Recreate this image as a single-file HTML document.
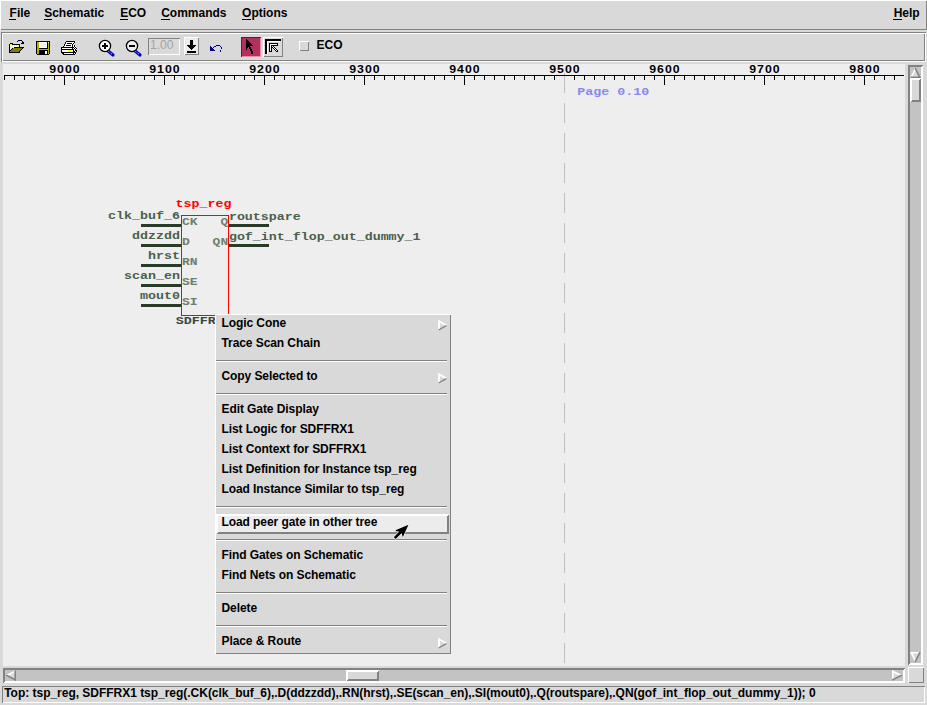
<!DOCTYPE html>
<html><head><meta charset="utf-8"><style>
html,body{margin:0;padding:0;background:#d9d9d9;width:927px;height:705px;overflow:hidden}
svg{position:absolute;left:0;top:0;display:block}
</style></head><body>
<svg width="927" height="705" viewBox="0 0 927 705" shape-rendering="crispEdges">
<rect x="0" y="0" width="927" height="1" fill="#ffffff"/>
<rect x="0" y="0" width="1" height="30" fill="#ffffff"/>
<rect x="1" y="29" width="926" height="1" fill="#828282"/>
<rect x="926" y="1" width="1" height="29" fill="#828282"/>
<text x="9.6" y="17" font-family="Liberation Sans" font-size="12" font-weight="bold" fill="#000" text-anchor="start" >File</text>
<text x="44.2" y="17" font-family="Liberation Sans" font-size="12" font-weight="bold" fill="#000" text-anchor="start" >Schematic</text>
<text x="120.2" y="17" font-family="Liberation Sans" font-size="12" font-weight="bold" fill="#000" text-anchor="start" >ECO</text>
<text x="161.2" y="17" font-family="Liberation Sans" font-size="12" font-weight="bold" fill="#000" text-anchor="start" >Commands</text>
<text x="242.1" y="17" font-family="Liberation Sans" font-size="12" font-weight="bold" fill="#000" text-anchor="start" >Options</text>
<rect x="9" y="19" width="7" height="1" fill="#000"/>
<rect x="44" y="19" width="8" height="1" fill="#000"/>
<rect x="120" y="19" width="8" height="1" fill="#000"/>
<rect x="161" y="19" width="9" height="1" fill="#000"/>
<rect x="242" y="19" width="9" height="1" fill="#000"/>
<rect x="893" y="19" width="9" height="1" fill="#000"/>
<text x="893.7" y="17" font-family="Liberation Sans" font-size="12" font-weight="bold" fill="#000" text-anchor="start" >Help</text>
<rect x="1" y="32" width="925" height="1" fill="#828282"/>
<rect x="1" y="32" width="1" height="30" fill="#828282"/>
<rect x="2" y="61" width="924" height="1" fill="#ffffff"/>
<rect x="925" y="33" width="1" height="29" fill="#ffffff"/>
<rect x="2" y="33" width="923" height="1" fill="#ffffff"/>
<rect x="2" y="33" width="1" height="28" fill="#ffffff"/>
<rect x="3" y="60" width="922" height="1" fill="#828282"/>
<rect x="924" y="34" width="1" height="27" fill="#828282"/>
<rect x="18" y="40" width="4" height="1" fill="#000000"/>
<rect x="17" y="41" width="1" height="1" fill="#000000"/>
<rect x="22" y="41" width="1" height="1" fill="#000000"/>
<rect x="22" y="42" width="2" height="1" fill="#000000"/>
<rect x="10" y="43" width="3" height="1" fill="#000000"/>
<rect x="21" y="43" width="3" height="1" fill="#000000"/>
<rect x="9" y="44" width="1" height="1" fill="#000000"/>
<rect x="10" y="44" width="2" height="1" fill="#ffff00"/>
<rect x="12" y="44" width="8" height="1" fill="#000000"/>
<rect x="9" y="45" width="1" height="1" fill="#000000"/>
<rect x="10" y="45" width="1" height="1" fill="#ffff00"/>
<rect x="11" y="45" width="1" height="1" fill="#ffffff"/>
<rect x="12" y="45" width="1" height="1" fill="#ffff00"/>
<rect x="13" y="45" width="1" height="1" fill="#ffffff"/>
<rect x="14" y="45" width="1" height="1" fill="#ffff00"/>
<rect x="15" y="45" width="1" height="1" fill="#ffffff"/>
<rect x="16" y="45" width="1" height="1" fill="#ffff00"/>
<rect x="17" y="45" width="1" height="1" fill="#ffffff"/>
<rect x="18" y="45" width="1" height="1" fill="#ffff00"/>
<rect x="19" y="45" width="1" height="1" fill="#000000"/>
<rect x="9" y="46" width="1" height="1" fill="#000000"/>
<rect x="10" y="46" width="1" height="1" fill="#ffffff"/>
<rect x="11" y="46" width="1" height="1" fill="#ffff00"/>
<rect x="12" y="46" width="1" height="1" fill="#ffffff"/>
<rect x="13" y="46" width="1" height="1" fill="#ffff00"/>
<rect x="14" y="46" width="1" height="1" fill="#ffffff"/>
<rect x="15" y="46" width="1" height="1" fill="#ffff00"/>
<rect x="16" y="46" width="1" height="1" fill="#ffffff"/>
<rect x="17" y="46" width="2" height="1" fill="#ffff00"/>
<rect x="19" y="46" width="1" height="1" fill="#000000"/>
<rect x="9" y="47" width="1" height="1" fill="#000000"/>
<rect x="10" y="47" width="1" height="1" fill="#ffff00"/>
<rect x="11" y="47" width="1" height="1" fill="#ffffff"/>
<rect x="12" y="47" width="1" height="1" fill="#ffff00"/>
<rect x="13" y="47" width="1" height="1" fill="#ffffff"/>
<rect x="14" y="47" width="10" height="1" fill="#000000"/>
<rect x="9" y="48" width="1" height="1" fill="#000000"/>
<rect x="10" y="48" width="1" height="1" fill="#ffffff"/>
<rect x="11" y="48" width="1" height="1" fill="#ffff00"/>
<rect x="12" y="48" width="1" height="1" fill="#000000"/>
<rect x="13" y="48" width="9" height="1" fill="#808000"/>
<rect x="22" y="48" width="1" height="1" fill="#000000"/>
<rect x="9" y="49" width="1" height="1" fill="#000000"/>
<rect x="10" y="49" width="1" height="1" fill="#ffff00"/>
<rect x="11" y="49" width="1" height="1" fill="#000000"/>
<rect x="12" y="49" width="9" height="1" fill="#808000"/>
<rect x="21" y="49" width="1" height="1" fill="#000000"/>
<rect x="9" y="50" width="2" height="1" fill="#000000"/>
<rect x="11" y="50" width="9" height="1" fill="#808000"/>
<rect x="20" y="50" width="1" height="1" fill="#000000"/>
<rect x="9" y="51" width="1" height="1" fill="#000000"/>
<rect x="10" y="51" width="9" height="1" fill="#808000"/>
<rect x="19" y="51" width="1" height="1" fill="#000000"/>
<rect x="9" y="52" width="11" height="1" fill="#000000"/>
<rect x="36" y="41" width="14" height="1" fill="#000000"/>
<rect x="36" y="42" width="1" height="1" fill="#000000"/>
<rect x="37" y="42" width="2" height="1" fill="#b4b400"/>
<rect x="39" y="42" width="8" height="1" fill="#ffffff"/>
<rect x="47" y="42" width="1" height="1" fill="#000000"/>
<rect x="48" y="42" width="1" height="1" fill="#ffffff"/>
<rect x="49" y="42" width="1" height="1" fill="#000000"/>
<rect x="36" y="43" width="1" height="1" fill="#000000"/>
<rect x="37" y="43" width="2" height="1" fill="#b4b400"/>
<rect x="39" y="43" width="1" height="1" fill="#ffffff"/>
<rect x="40" y="43" width="6" height="1" fill="#eeeef4"/>
<rect x="46" y="43" width="1" height="1" fill="#ffffff"/>
<rect x="47" y="43" width="1" height="1" fill="#000000"/>
<rect x="48" y="43" width="1" height="1" fill="#b4b400"/>
<rect x="49" y="43" width="1" height="1" fill="#000000"/>
<rect x="36" y="44" width="1" height="1" fill="#000000"/>
<rect x="37" y="44" width="2" height="1" fill="#b4b400"/>
<rect x="39" y="44" width="1" height="1" fill="#ffffff"/>
<rect x="40" y="44" width="6" height="1" fill="#eeeef4"/>
<rect x="46" y="44" width="1" height="1" fill="#ffffff"/>
<rect x="47" y="44" width="1" height="1" fill="#000000"/>
<rect x="48" y="44" width="1" height="1" fill="#b4b400"/>
<rect x="49" y="44" width="1" height="1" fill="#000000"/>
<rect x="36" y="45" width="1" height="1" fill="#000000"/>
<rect x="37" y="45" width="2" height="1" fill="#b4b400"/>
<rect x="39" y="45" width="1" height="1" fill="#ffffff"/>
<rect x="40" y="45" width="6" height="1" fill="#eeeef4"/>
<rect x="46" y="45" width="1" height="1" fill="#ffffff"/>
<rect x="47" y="45" width="1" height="1" fill="#000000"/>
<rect x="48" y="45" width="1" height="1" fill="#b4b400"/>
<rect x="49" y="45" width="1" height="1" fill="#000000"/>
<rect x="36" y="46" width="1" height="1" fill="#000000"/>
<rect x="37" y="46" width="2" height="1" fill="#b4b400"/>
<rect x="39" y="46" width="1" height="1" fill="#ffffff"/>
<rect x="40" y="46" width="6" height="1" fill="#eeeef4"/>
<rect x="46" y="46" width="1" height="1" fill="#ffffff"/>
<rect x="47" y="46" width="1" height="1" fill="#000000"/>
<rect x="48" y="46" width="1" height="1" fill="#b4b400"/>
<rect x="49" y="46" width="1" height="1" fill="#000000"/>
<rect x="36" y="47" width="1" height="1" fill="#000000"/>
<rect x="37" y="47" width="2" height="1" fill="#b4b400"/>
<rect x="39" y="47" width="8" height="1" fill="#ffffff"/>
<rect x="47" y="47" width="1" height="1" fill="#000000"/>
<rect x="48" y="47" width="1" height="1" fill="#b4b400"/>
<rect x="49" y="47" width="1" height="1" fill="#000000"/>
<rect x="36" y="48" width="1" height="1" fill="#000000"/>
<rect x="37" y="48" width="2" height="1" fill="#b4b400"/>
<rect x="39" y="48" width="9" height="1" fill="#000000"/>
<rect x="48" y="48" width="1" height="1" fill="#b4b400"/>
<rect x="49" y="48" width="1" height="1" fill="#000000"/>
<rect x="36" y="49" width="1" height="1" fill="#000000"/>
<rect x="37" y="49" width="12" height="1" fill="#b4b400"/>
<rect x="49" y="49" width="1" height="1" fill="#000000"/>
<rect x="36" y="50" width="1" height="1" fill="#000000"/>
<rect x="37" y="50" width="2" height="1" fill="#b4b400"/>
<rect x="39" y="50" width="9" height="1" fill="#000000"/>
<rect x="48" y="50" width="1" height="1" fill="#b4b400"/>
<rect x="49" y="50" width="1" height="1" fill="#000000"/>
<rect x="36" y="51" width="1" height="1" fill="#000000"/>
<rect x="37" y="51" width="2" height="1" fill="#b4b400"/>
<rect x="39" y="51" width="6" height="1" fill="#000000"/>
<rect x="45" y="51" width="2" height="1" fill="#ffffff"/>
<rect x="47" y="51" width="1" height="1" fill="#000000"/>
<rect x="48" y="51" width="1" height="1" fill="#b4b400"/>
<rect x="49" y="51" width="1" height="1" fill="#000000"/>
<rect x="36" y="52" width="1" height="1" fill="#000000"/>
<rect x="37" y="52" width="2" height="1" fill="#b4b400"/>
<rect x="39" y="52" width="6" height="1" fill="#000000"/>
<rect x="45" y="52" width="2" height="1" fill="#ffffff"/>
<rect x="47" y="52" width="1" height="1" fill="#000000"/>
<rect x="48" y="52" width="1" height="1" fill="#b4b400"/>
<rect x="49" y="52" width="1" height="1" fill="#000000"/>
<rect x="36" y="53" width="1" height="1" fill="#000000"/>
<rect x="37" y="53" width="2" height="1" fill="#b4b400"/>
<rect x="39" y="53" width="6" height="1" fill="#000000"/>
<rect x="45" y="53" width="2" height="1" fill="#ffffff"/>
<rect x="47" y="53" width="1" height="1" fill="#000000"/>
<rect x="48" y="53" width="1" height="1" fill="#b4b400"/>
<rect x="49" y="53" width="1" height="1" fill="#000000"/>
<rect x="37" y="54" width="12" height="1" fill="#000000"/>
<rect x="66" y="41" width="9" height="1" fill="#000000"/>
<rect x="65" y="42" width="1" height="1" fill="#000000"/>
<rect x="66" y="42" width="8" height="1" fill="#ffffff"/>
<rect x="74" y="42" width="1" height="1" fill="#000000"/>
<rect x="65" y="43" width="1" height="1" fill="#000000"/>
<rect x="66" y="43" width="1" height="1" fill="#ffffff"/>
<rect x="67" y="43" width="5" height="1" fill="#000000"/>
<rect x="72" y="43" width="1" height="1" fill="#ffffff"/>
<rect x="73" y="43" width="1" height="1" fill="#000000"/>
<rect x="64" y="44" width="1" height="1" fill="#000000"/>
<rect x="65" y="44" width="7" height="1" fill="#ffffff"/>
<rect x="72" y="44" width="1" height="1" fill="#000000"/>
<rect x="64" y="45" width="1" height="1" fill="#000000"/>
<rect x="65" y="45" width="1" height="1" fill="#ffffff"/>
<rect x="66" y="45" width="5" height="1" fill="#000000"/>
<rect x="71" y="45" width="1" height="1" fill="#ffffff"/>
<rect x="72" y="45" width="1" height="1" fill="#000000"/>
<rect x="73" y="45" width="1" height="1" fill="#ffffff"/>
<rect x="74" y="45" width="1" height="1" fill="#000000"/>
<rect x="63" y="46" width="1" height="1" fill="#000000"/>
<rect x="64" y="46" width="8" height="1" fill="#ffffff"/>
<rect x="72" y="46" width="1" height="1" fill="#000000"/>
<rect x="73" y="46" width="1" height="1" fill="#ffffff"/>
<rect x="74" y="46" width="1" height="1" fill="#000000"/>
<rect x="75" y="46" width="1" height="1" fill="#ffffff"/>
<rect x="61" y="47" width="13" height="1" fill="#000000"/>
<rect x="74" y="47" width="1" height="1" fill="#ffffff"/>
<rect x="75" y="47" width="1" height="1" fill="#000000"/>
<rect x="61" y="48" width="1" height="1" fill="#000000"/>
<rect x="62" y="48" width="10" height="1" fill="#ffffff"/>
<rect x="72" y="48" width="1" height="1" fill="#000000"/>
<rect x="73" y="48" width="1" height="1" fill="#ffffff"/>
<rect x="74" y="48" width="1" height="1" fill="#000000"/>
<rect x="75" y="48" width="1" height="1" fill="#ffffff"/>
<rect x="76" y="48" width="1" height="1" fill="#000000"/>
<rect x="61" y="49" width="13" height="1" fill="#000000"/>
<rect x="74" y="49" width="1" height="1" fill="#ffffff"/>
<rect x="75" y="49" width="1" height="1" fill="#000000"/>
<rect x="61" y="50" width="1" height="1" fill="#000000"/>
<rect x="62" y="50" width="6" height="1" fill="#ffffff"/>
<rect x="68" y="50" width="3" height="1" fill="#ffff00"/>
<rect x="71" y="50" width="2" height="1" fill="#ffffff"/>
<rect x="73" y="50" width="1" height="1" fill="#000000"/>
<rect x="74" y="50" width="1" height="1" fill="#ffffff"/>
<rect x="75" y="50" width="2" height="1" fill="#000000"/>
<rect x="61" y="51" width="1" height="1" fill="#000000"/>
<rect x="62" y="51" width="6" height="1" fill="#ffffff"/>
<rect x="68" y="51" width="3" height="1" fill="#ffff00"/>
<rect x="71" y="51" width="2" height="1" fill="#ffffff"/>
<rect x="73" y="51" width="2" height="1" fill="#000000"/>
<rect x="75" y="51" width="1" height="1" fill="#ffffff"/>
<rect x="76" y="51" width="1" height="1" fill="#000000"/>
<rect x="61" y="52" width="15" height="1" fill="#000000"/>
<rect x="62" y="53" width="2" height="1" fill="#000000"/>
<rect x="64" y="53" width="9" height="1" fill="#ffffff"/>
<rect x="73" y="53" width="1" height="1" fill="#000000"/>
<rect x="74" y="53" width="1" height="1" fill="#ffffff"/>
<rect x="75" y="53" width="1" height="1" fill="#000000"/>
<rect x="63" y="54" width="12" height="1" fill="#000000"/>
<g shape-rendering="auto"><line x1="107.5" y1="50.5" x2="113" y2="55" stroke="#0000c0" stroke-width="3.2" stroke-linecap="round"/><line x1="108" y1="51" x2="112.5" y2="54.6" stroke="#ffffff" stroke-width="0.8" stroke-dasharray="1 1"/><circle cx="105" cy="46" r="5.6" fill="#ffffff" stroke="#000" stroke-width="1.3"/></g>
<rect x="102" y="45" width="6" height="2" fill="#000"/>
<rect x="104" y="43" width="2" height="6" fill="#000"/>
<g shape-rendering="auto"><line x1="134.5" y1="50.5" x2="140" y2="55" stroke="#0000c0" stroke-width="3.2" stroke-linecap="round"/><line x1="135" y1="51" x2="139.5" y2="54.6" stroke="#ffffff" stroke-width="0.8" stroke-dasharray="1 1"/><circle cx="132" cy="46" r="5.6" fill="#eeeeee" stroke="#000" stroke-width="1.3"/></g>
<rect x="129" y="45" width="6" height="2" fill="#000"/>
<rect x="148" y="38" width="32" height="17" fill="#d9d9d9"/>
<rect x="148" y="38" width="32" height="1" fill="#828282"/>
<rect x="148" y="38" width="1" height="17" fill="#828282"/>
<rect x="149" y="54" width="31" height="1" fill="#ffffff"/>
<rect x="179" y="39" width="1" height="16" fill="#ffffff"/>
<text x="150" y="49" font-family="Liberation Sans" font-size="12" font-weight="normal" fill="#a3a3a3" text-anchor="start" >1.00</text>
<rect x="184" y="37" width="15" height="18" fill="#ececec"/>
<rect x="184" y="37" width="15" height="1" fill="#ffffff"/>
<rect x="184" y="37" width="1" height="18" fill="#ffffff"/>
<rect x="185" y="54" width="14" height="1" fill="#828282"/>
<rect x="198" y="38" width="1" height="17" fill="#828282"/>
<rect x="190" y="40" width="3" height="1" fill="#000000"/>
<rect x="190" y="41" width="3" height="1" fill="#000000"/>
<rect x="190" y="42" width="3" height="1" fill="#000000"/>
<rect x="190" y="43" width="3" height="1" fill="#000000"/>
<rect x="190" y="44" width="3" height="1" fill="#000000"/>
<rect x="187" y="45" width="9" height="1" fill="#000000"/>
<rect x="188" y="46" width="7" height="1" fill="#000000"/>
<rect x="189" y="47" width="5" height="1" fill="#000000"/>
<rect x="190" y="48" width="3" height="1" fill="#000000"/>
<rect x="191" y="49" width="1" height="1" fill="#000000"/>
<rect x="187" y="51" width="9" height="1" fill="#000000"/>
<rect x="187" y="52" width="9" height="1" fill="#000000"/>
<rect x="216" y="45" width="4" height="1" fill="#000080"/>
<rect x="210" y="46" width="1" height="1" fill="#000080"/>
<rect x="214" y="46" width="2" height="1" fill="#000080"/>
<rect x="220" y="46" width="1" height="1" fill="#000080"/>
<rect x="210" y="47" width="2" height="1" fill="#000080"/>
<rect x="213" y="47" width="1" height="1" fill="#000080"/>
<rect x="221" y="47" width="1" height="1" fill="#000080"/>
<rect x="210" y="48" width="3" height="1" fill="#000080"/>
<rect x="221" y="48" width="1" height="1" fill="#000080"/>
<rect x="210" y="49" width="4" height="1" fill="#000080"/>
<rect x="210" y="50" width="5" height="1" fill="#000080"/>
<rect x="220" y="50" width="1" height="1" fill="#000080"/>
<rect x="220" y="51" width="1" height="1" fill="#000080"/>
<rect x="241" y="37" width="20" height="20" fill="#b03060"/>
<rect x="241" y="37" width="20" height="1" fill="#6b1237"/>
<rect x="241" y="37" width="1" height="20" fill="#6b1237"/>
<rect x="242" y="56" width="19" height="1" fill="#f08aa8"/>
<rect x="260" y="38" width="1" height="19" fill="#f08aa8"/>
<rect x="246" y="39" width="1" height="1" fill="#000000"/>
<rect x="246" y="40" width="2" height="1" fill="#000000"/>
<rect x="246" y="41" width="3" height="1" fill="#000000"/>
<rect x="246" y="42" width="4" height="1" fill="#000000"/>
<rect x="246" y="43" width="5" height="1" fill="#000000"/>
<rect x="246" y="44" width="6" height="1" fill="#000000"/>
<rect x="246" y="45" width="7" height="1" fill="#000000"/>
<rect x="246" y="46" width="4" height="1" fill="#000000"/>
<rect x="246" y="47" width="2" height="1" fill="#000000"/>
<rect x="249" y="47" width="2" height="1" fill="#000000"/>
<rect x="246" y="48" width="1" height="1" fill="#000000"/>
<rect x="249" y="48" width="2" height="1" fill="#000000"/>
<rect x="246" y="49" width="1" height="1" fill="#000000"/>
<rect x="250" y="49" width="2" height="1" fill="#000000"/>
<rect x="250" y="50" width="2" height="1" fill="#000000"/>
<rect x="251" y="51" width="2" height="1" fill="#000000"/>
<rect x="251" y="52" width="2" height="1" fill="#000000"/>
<rect x="251" y="53" width="2" height="1" fill="#000000"/>
<rect x="263" y="37" width="20" height="20" fill="#d9d9d9"/>
<rect x="263" y="37" width="20" height="1" fill="#ffffff"/>
<rect x="263" y="37" width="1" height="20" fill="#ffffff"/>
<rect x="264" y="56" width="19" height="1" fill="#828282"/>
<rect x="282" y="38" width="1" height="19" fill="#828282"/>
<rect x="265" y="39" width="16" height="1" fill="#000000"/>
<rect x="265" y="40" width="16" height="1" fill="#000000"/>
<rect x="265" y="41" width="2" height="1" fill="#000000"/>
<rect x="267" y="41" width="13" height="1" fill="#ffffff"/>
<rect x="265" y="42" width="2" height="1" fill="#000000"/>
<rect x="267" y="42" width="1" height="1" fill="#ffffff"/>
<rect x="265" y="43" width="2" height="1" fill="#000000"/>
<rect x="267" y="43" width="1" height="1" fill="#ffffff"/>
<rect x="269" y="43" width="9" height="1" fill="#000000"/>
<rect x="265" y="44" width="2" height="1" fill="#000000"/>
<rect x="267" y="44" width="1" height="1" fill="#ffffff"/>
<rect x="269" y="44" width="1" height="1" fill="#000000"/>
<rect x="270" y="44" width="7" height="1" fill="#ffffff"/>
<rect x="277" y="44" width="1" height="1" fill="#000000"/>
<rect x="265" y="45" width="2" height="1" fill="#000000"/>
<rect x="267" y="45" width="1" height="1" fill="#ffffff"/>
<rect x="269" y="45" width="1" height="1" fill="#000000"/>
<rect x="270" y="45" width="1" height="1" fill="#ffffff"/>
<rect x="271" y="45" width="7" height="1" fill="#000000"/>
<rect x="265" y="46" width="2" height="1" fill="#000000"/>
<rect x="267" y="46" width="1" height="1" fill="#ffffff"/>
<rect x="269" y="46" width="1" height="1" fill="#000000"/>
<rect x="270" y="46" width="1" height="1" fill="#ffffff"/>
<rect x="271" y="46" width="1" height="1" fill="#000000"/>
<rect x="272" y="46" width="1" height="1" fill="#ffffff"/>
<rect x="273" y="46" width="1" height="1" fill="#000000"/>
<rect x="265" y="47" width="2" height="1" fill="#000000"/>
<rect x="267" y="47" width="1" height="1" fill="#ffffff"/>
<rect x="269" y="47" width="1" height="1" fill="#000000"/>
<rect x="270" y="47" width="1" height="1" fill="#ffffff"/>
<rect x="271" y="47" width="2" height="1" fill="#000000"/>
<rect x="273" y="47" width="1" height="1" fill="#ffffff"/>
<rect x="274" y="47" width="1" height="1" fill="#000000"/>
<rect x="265" y="48" width="2" height="1" fill="#000000"/>
<rect x="267" y="48" width="1" height="1" fill="#ffffff"/>
<rect x="269" y="48" width="1" height="1" fill="#000000"/>
<rect x="270" y="48" width="1" height="1" fill="#ffffff"/>
<rect x="271" y="48" width="1" height="1" fill="#000000"/>
<rect x="273" y="48" width="1" height="1" fill="#000000"/>
<rect x="274" y="48" width="1" height="1" fill="#ffffff"/>
<rect x="275" y="48" width="1" height="1" fill="#000000"/>
<rect x="265" y="49" width="2" height="1" fill="#000000"/>
<rect x="267" y="49" width="1" height="1" fill="#ffffff"/>
<rect x="269" y="49" width="1" height="1" fill="#000000"/>
<rect x="270" y="49" width="1" height="1" fill="#ffffff"/>
<rect x="271" y="49" width="1" height="1" fill="#000000"/>
<rect x="274" y="49" width="1" height="1" fill="#000000"/>
<rect x="275" y="49" width="1" height="1" fill="#ffffff"/>
<rect x="276" y="49" width="1" height="1" fill="#000000"/>
<rect x="265" y="50" width="2" height="1" fill="#000000"/>
<rect x="267" y="50" width="1" height="1" fill="#ffffff"/>
<rect x="269" y="50" width="1" height="1" fill="#000000"/>
<rect x="270" y="50" width="1" height="1" fill="#ffffff"/>
<rect x="271" y="50" width="1" height="1" fill="#000000"/>
<rect x="275" y="50" width="1" height="1" fill="#000000"/>
<rect x="276" y="50" width="1" height="1" fill="#ffffff"/>
<rect x="277" y="50" width="1" height="1" fill="#000000"/>
<rect x="265" y="51" width="2" height="1" fill="#000000"/>
<rect x="267" y="51" width="1" height="1" fill="#ffffff"/>
<rect x="269" y="51" width="3" height="1" fill="#000000"/>
<rect x="276" y="51" width="2" height="1" fill="#000000"/>
<rect x="265" y="52" width="2" height="1" fill="#000000"/>
<rect x="267" y="52" width="1" height="1" fill="#ffffff"/>
<rect x="265" y="53" width="2" height="1" fill="#000000"/>
<rect x="267" y="53" width="1" height="1" fill="#ffffff"/>
<rect x="299" y="41" width="10" height="10" fill="#d9d9d9"/>
<rect x="299" y="41" width="10" height="1" fill="#ffffff"/>
<rect x="299" y="41" width="1" height="10" fill="#ffffff"/>
<rect x="300" y="50" width="9" height="1" fill="#828282"/>
<rect x="308" y="42" width="1" height="9" fill="#828282"/>
<text x="316.6" y="49" font-family="Liberation Sans" font-size="12" font-weight="bold" fill="#000" text-anchor="start" >ECO</text>
<rect x="3" y="64" width="902" height="602" fill="#eeeeee"/>
<rect x="4" y="76" width="1" height="4" fill="#000"/>
<rect x="14" y="76" width="1" height="4" fill="#000"/>
<rect x="24" y="76" width="1" height="4" fill="#000"/>
<rect x="34" y="76" width="1" height="4" fill="#000"/>
<rect x="44" y="76" width="1" height="4" fill="#000"/>
<rect x="54" y="76" width="1" height="4" fill="#000"/>
<rect x="64" y="76" width="1" height="9" fill="#000"/>
<rect x="74" y="76" width="1" height="4" fill="#000"/>
<rect x="84" y="76" width="1" height="4" fill="#000"/>
<rect x="94" y="76" width="1" height="4" fill="#000"/>
<rect x="104" y="76" width="1" height="4" fill="#000"/>
<rect x="114" y="76" width="1" height="4" fill="#000"/>
<rect x="124" y="76" width="1" height="4" fill="#000"/>
<rect x="134" y="76" width="1" height="4" fill="#000"/>
<rect x="144" y="76" width="1" height="4" fill="#000"/>
<rect x="154" y="76" width="1" height="4" fill="#000"/>
<rect x="164" y="76" width="1" height="9" fill="#000"/>
<rect x="174" y="76" width="1" height="4" fill="#000"/>
<rect x="184" y="76" width="1" height="4" fill="#000"/>
<rect x="194" y="76" width="1" height="4" fill="#000"/>
<rect x="204" y="76" width="1" height="4" fill="#000"/>
<rect x="214" y="76" width="1" height="4" fill="#000"/>
<rect x="224" y="76" width="1" height="4" fill="#000"/>
<rect x="234" y="76" width="1" height="4" fill="#000"/>
<rect x="244" y="76" width="1" height="4" fill="#000"/>
<rect x="254" y="76" width="1" height="4" fill="#000"/>
<rect x="264" y="76" width="1" height="9" fill="#000"/>
<rect x="274" y="76" width="1" height="4" fill="#000"/>
<rect x="284" y="76" width="1" height="4" fill="#000"/>
<rect x="294" y="76" width="1" height="4" fill="#000"/>
<rect x="304" y="76" width="1" height="4" fill="#000"/>
<rect x="314" y="76" width="1" height="4" fill="#000"/>
<rect x="324" y="76" width="1" height="4" fill="#000"/>
<rect x="334" y="76" width="1" height="4" fill="#000"/>
<rect x="344" y="76" width="1" height="4" fill="#000"/>
<rect x="354" y="76" width="1" height="4" fill="#000"/>
<rect x="364" y="76" width="1" height="9" fill="#000"/>
<rect x="374" y="76" width="1" height="4" fill="#000"/>
<rect x="384" y="76" width="1" height="4" fill="#000"/>
<rect x="394" y="76" width="1" height="4" fill="#000"/>
<rect x="404" y="76" width="1" height="4" fill="#000"/>
<rect x="414" y="76" width="1" height="4" fill="#000"/>
<rect x="424" y="76" width="1" height="4" fill="#000"/>
<rect x="434" y="76" width="1" height="4" fill="#000"/>
<rect x="444" y="76" width="1" height="4" fill="#000"/>
<rect x="454" y="76" width="1" height="4" fill="#000"/>
<rect x="464" y="76" width="1" height="9" fill="#000"/>
<rect x="474" y="76" width="1" height="4" fill="#000"/>
<rect x="484" y="76" width="1" height="4" fill="#000"/>
<rect x="494" y="76" width="1" height="4" fill="#000"/>
<rect x="504" y="76" width="1" height="4" fill="#000"/>
<rect x="514" y="76" width="1" height="4" fill="#000"/>
<rect x="524" y="76" width="1" height="4" fill="#000"/>
<rect x="534" y="76" width="1" height="4" fill="#000"/>
<rect x="544" y="76" width="1" height="4" fill="#000"/>
<rect x="554" y="76" width="1" height="4" fill="#000"/>
<rect x="574" y="76" width="1" height="4" fill="#000"/>
<rect x="584" y="76" width="1" height="4" fill="#000"/>
<rect x="594" y="76" width="1" height="4" fill="#000"/>
<rect x="604" y="76" width="1" height="4" fill="#000"/>
<rect x="614" y="76" width="1" height="4" fill="#000"/>
<rect x="624" y="76" width="1" height="4" fill="#000"/>
<rect x="634" y="76" width="1" height="4" fill="#000"/>
<rect x="644" y="76" width="1" height="4" fill="#000"/>
<rect x="654" y="76" width="1" height="4" fill="#000"/>
<rect x="664" y="76" width="1" height="9" fill="#000"/>
<rect x="674" y="76" width="1" height="4" fill="#000"/>
<rect x="684" y="76" width="1" height="4" fill="#000"/>
<rect x="694" y="76" width="1" height="4" fill="#000"/>
<rect x="704" y="76" width="1" height="4" fill="#000"/>
<rect x="714" y="76" width="1" height="4" fill="#000"/>
<rect x="724" y="76" width="1" height="4" fill="#000"/>
<rect x="734" y="76" width="1" height="4" fill="#000"/>
<rect x="744" y="76" width="1" height="4" fill="#000"/>
<rect x="754" y="76" width="1" height="4" fill="#000"/>
<rect x="764" y="76" width="1" height="9" fill="#000"/>
<rect x="774" y="76" width="1" height="4" fill="#000"/>
<rect x="784" y="76" width="1" height="4" fill="#000"/>
<rect x="794" y="76" width="1" height="4" fill="#000"/>
<rect x="804" y="76" width="1" height="4" fill="#000"/>
<rect x="814" y="76" width="1" height="4" fill="#000"/>
<rect x="824" y="76" width="1" height="4" fill="#000"/>
<rect x="834" y="76" width="1" height="4" fill="#000"/>
<rect x="844" y="76" width="1" height="4" fill="#000"/>
<rect x="854" y="76" width="1" height="4" fill="#000"/>
<rect x="864" y="76" width="1" height="9" fill="#000"/>
<rect x="874" y="76" width="1" height="4" fill="#000"/>
<rect x="884" y="76" width="1" height="4" fill="#000"/>
<rect x="894" y="76" width="1" height="4" fill="#000"/>
<text transform="translate(49.2,73) scale(1.12,1)" x="0" y="0" font-family="Liberation Sans" font-size="11" font-weight="bold" letter-spacing="0.94" fill="#000">9000</text>
<text transform="translate(149.2,73) scale(1.12,1)" x="0" y="0" font-family="Liberation Sans" font-size="11" font-weight="bold" letter-spacing="0.94" fill="#000">9100</text>
<text transform="translate(249.2,73) scale(1.12,1)" x="0" y="0" font-family="Liberation Sans" font-size="11" font-weight="bold" letter-spacing="0.94" fill="#000">9200</text>
<text transform="translate(349.2,73) scale(1.12,1)" x="0" y="0" font-family="Liberation Sans" font-size="11" font-weight="bold" letter-spacing="0.94" fill="#000">9300</text>
<text transform="translate(449.2,73) scale(1.12,1)" x="0" y="0" font-family="Liberation Sans" font-size="11" font-weight="bold" letter-spacing="0.94" fill="#000">9400</text>
<text transform="translate(549.2,73) scale(1.12,1)" x="0" y="0" font-family="Liberation Sans" font-size="11" font-weight="bold" letter-spacing="0.94" fill="#000">9500</text>
<text transform="translate(649.2,73) scale(1.12,1)" x="0" y="0" font-family="Liberation Sans" font-size="11" font-weight="bold" letter-spacing="0.94" fill="#000">9600</text>
<text transform="translate(749.2,73) scale(1.12,1)" x="0" y="0" font-family="Liberation Sans" font-size="11" font-weight="bold" letter-spacing="0.94" fill="#000">9700</text>
<text transform="translate(849.2,73) scale(1.12,1)" x="0" y="0" font-family="Liberation Sans" font-size="11" font-weight="bold" letter-spacing="0.94" fill="#000">9800</text>
<rect x="564" y="73" width="1" height="20" fill="#c0c0c0"/>
<rect x="564" y="103" width="1" height="20" fill="#c0c0c0"/>
<rect x="564" y="133" width="1" height="20" fill="#c0c0c0"/>
<rect x="564" y="163" width="1" height="20" fill="#c0c0c0"/>
<rect x="564" y="193" width="1" height="20" fill="#c0c0c0"/>
<rect x="564" y="223" width="1" height="20" fill="#c0c0c0"/>
<rect x="564" y="253" width="1" height="20" fill="#c0c0c0"/>
<rect x="564" y="283" width="1" height="20" fill="#c0c0c0"/>
<rect x="564" y="313" width="1" height="20" fill="#c0c0c0"/>
<rect x="564" y="343" width="1" height="20" fill="#c0c0c0"/>
<rect x="564" y="373" width="1" height="20" fill="#c0c0c0"/>
<rect x="564" y="403" width="1" height="20" fill="#c0c0c0"/>
<rect x="564" y="433" width="1" height="20" fill="#c0c0c0"/>
<rect x="564" y="463" width="1" height="20" fill="#c0c0c0"/>
<rect x="564" y="493" width="1" height="20" fill="#c0c0c0"/>
<rect x="564" y="523" width="1" height="20" fill="#c0c0c0"/>
<rect x="564" y="553" width="1" height="20" fill="#c0c0c0"/>
<rect x="564" y="583" width="1" height="20" fill="#c0c0c0"/>
<rect x="564" y="613" width="1" height="20" fill="#c0c0c0"/>
<rect x="564" y="643" width="1" height="20" fill="#c0c0c0"/>
<text transform="translate(577.3,95) scale(1,0.82)" x="0" y="0" font-family="Liberation Mono" font-size="13.33" font-weight="bold" fill="#8888f4" letter-spacing="0">Page 0.10</text>
<rect x="4" y="75" width="900" height="1" fill="#000"/>
<rect x="141" y="224" width="40" height="3" fill="#283c28"/>
<text transform="translate(108.02,218.8) scale(1,0.81)" x="0" y="0" font-family="Liberation Mono" font-size="13.33" font-weight="bold" fill="#4a5f4a" letter-spacing="0">clk_buf_6</text>
<text transform="translate(182.0,224.7) scale(1,0.85)" x="0" y="0" font-family="Liberation Mono" font-size="13.0" font-weight="bold" fill="#6b806b" letter-spacing="0">CK</text>
<rect x="141" y="244" width="40" height="3" fill="#283c28"/>
<text transform="translate(132.01,238.8) scale(1,0.81)" x="0" y="0" font-family="Liberation Mono" font-size="13.33" font-weight="bold" fill="#4a5f4a" letter-spacing="0">ddzzdd</text>
<text transform="translate(182.0,244.7) scale(1,0.85)" x="0" y="0" font-family="Liberation Mono" font-size="13.0" font-weight="bold" fill="#6b806b" letter-spacing="0">D</text>
<rect x="141" y="264" width="40" height="3" fill="#283c28"/>
<text transform="translate(148.01,258.8) scale(1,0.81)" x="0" y="0" font-family="Liberation Mono" font-size="13.33" font-weight="bold" fill="#4a5f4a" letter-spacing="0">hrst</text>
<text transform="translate(182.0,264.7) scale(1,0.85)" x="0" y="0" font-family="Liberation Mono" font-size="13.0" font-weight="bold" fill="#6b806b" letter-spacing="0">RN</text>
<rect x="141" y="284" width="40" height="3" fill="#283c28"/>
<text transform="translate(124.01,278.8) scale(1,0.81)" x="0" y="0" font-family="Liberation Mono" font-size="13.33" font-weight="bold" fill="#4a5f4a" letter-spacing="0">scan_en</text>
<text transform="translate(182.0,284.7) scale(1,0.85)" x="0" y="0" font-family="Liberation Mono" font-size="13.0" font-weight="bold" fill="#6b806b" letter-spacing="0">SE</text>
<rect x="141" y="304" width="40" height="3" fill="#283c28"/>
<text transform="translate(140.01,298.8) scale(1,0.81)" x="0" y="0" font-family="Liberation Mono" font-size="13.33" font-weight="bold" fill="#4a5f4a" letter-spacing="0">mout0</text>
<text transform="translate(182.0,304.7) scale(1,0.85)" x="0" y="0" font-family="Liberation Mono" font-size="13.0" font-weight="bold" fill="#6b806b" letter-spacing="0">SI</text>
<rect x="229" y="224" width="40" height="3" fill="#283c28"/>
<text transform="translate(228.9,220) scale(1,0.81)" x="0" y="0" font-family="Liberation Mono" font-size="13.33" font-weight="bold" fill="#4a5f4a" letter-spacing="0">routspare</text>
<text transform="translate(220.4,224.7) scale(1,0.85)" x="0" y="0" font-family="Liberation Mono" font-size="13.0" font-weight="bold" fill="#6b806b" letter-spacing="0">Q</text>
<rect x="229" y="244" width="40" height="3" fill="#283c28"/>
<text transform="translate(228.9,240) scale(1,0.81)" x="0" y="0" font-family="Liberation Mono" font-size="13.33" font-weight="bold" fill="#4a5f4a" letter-spacing="0">gof_int_flop_out_dummy_1</text>
<text transform="translate(212.6,244.7) scale(1,0.85)" x="0" y="0" font-family="Liberation Mono" font-size="13.0" font-weight="bold" fill="#6b806b" letter-spacing="0">QN</text>
<rect x="181.5" y="215.5" width="47" height="100" fill="none" stroke="#ff0000" stroke-width="1"/>
<text transform="translate(175.5,206.9) scale(1,0.81)" x="0" y="0" font-family="Liberation Mono" font-size="13.33" font-weight="bold" fill="#ff0000" letter-spacing="0">tsp_reg</text>
<text transform="translate(175.7,324) scale(1,0.85)" x="0" y="0" font-family="Liberation Mono" font-size="13.33" font-weight="bold" fill="#3a4a3a" letter-spacing="0">SDFFRX1</text>
<rect x="908" y="65" width="15" height="600" fill="#c3c3c3"/>
<rect x="908" y="65" width="15" height="1" fill="#828282"/>
<rect x="908" y="65" width="1" height="600" fill="#828282"/>
<rect x="909" y="664" width="14" height="1" fill="#ffffff"/>
<rect x="922" y="66" width="1" height="599" fill="#ffffff"/>
<rect x="909" y="66" width="13" height="1" fill="#828282"/>
<rect x="909" y="66" width="1" height="598" fill="#828282"/>
<rect x="910" y="663" width="12" height="1" fill="#ffffff"/>
<rect x="921" y="67" width="1" height="597" fill="#ffffff"/>
<rect x="3" y="668" width="902" height="15" fill="#c3c3c3"/>
<rect x="3" y="668" width="902" height="1" fill="#828282"/>
<rect x="3" y="668" width="1" height="15" fill="#828282"/>
<rect x="4" y="682" width="901" height="1" fill="#ffffff"/>
<rect x="904" y="669" width="1" height="14" fill="#ffffff"/>
<rect x="4" y="669" width="900" height="1" fill="#828282"/>
<rect x="4" y="669" width="1" height="13" fill="#828282"/>
<rect x="5" y="681" width="899" height="1" fill="#ffffff"/>
<rect x="903" y="670" width="1" height="12" fill="#ffffff"/>
<rect x="910" y="78" width="11" height="24" fill="#d9d9d9"/>
<rect x="910" y="78" width="11" height="1" fill="#ffffff"/>
<rect x="910" y="78" width="1" height="24" fill="#ffffff"/>
<rect x="911" y="101" width="10" height="1" fill="#828282"/>
<rect x="920" y="79" width="1" height="23" fill="#828282"/>
<rect x="911" y="79" width="9" height="1" fill="#ffffff"/>
<rect x="911" y="79" width="1" height="22" fill="#ffffff"/>
<rect x="912" y="100" width="8" height="1" fill="#828282"/>
<rect x="919" y="80" width="1" height="21" fill="#828282"/>
<rect x="346" y="670" width="33" height="11" fill="#d9d9d9"/>
<rect x="346" y="670" width="33" height="1" fill="#ffffff"/>
<rect x="346" y="670" width="1" height="11" fill="#ffffff"/>
<rect x="347" y="680" width="32" height="1" fill="#828282"/>
<rect x="378" y="671" width="1" height="10" fill="#828282"/>
<rect x="347" y="671" width="31" height="1" fill="#ffffff"/>
<rect x="347" y="671" width="1" height="9" fill="#ffffff"/>
<rect x="348" y="679" width="30" height="1" fill="#828282"/>
<rect x="377" y="672" width="1" height="8" fill="#828282"/>
<rect x="908" y="667" width="16" height="1" fill="#ffffff"/>
<rect x="908" y="667" width="1" height="16" fill="#ffffff"/>
<rect x="909" y="682" width="15" height="1" fill="#828282"/>
<rect x="923" y="668" width="1" height="15" fill="#828282"/>
<clipPath id="tc1"><polygon points="915.5,67 910,78 921,78"/></clipPath>
<g shape-rendering="auto" clip-path="url(#tc1)"><polygon points="915.5,67 910,78 921,78" fill="#d9d9d9"/>
<line x1="915.5" y1="67" x2="910" y2="78" stroke="#fff" stroke-width="3.2"/>
<line x1="910" y1="78" x2="921" y2="78" stroke="#828282" stroke-width="3.2"/>
<line x1="921" y1="78" x2="915.5" y2="67" stroke="#828282" stroke-width="3.2"/>
</g>
<clipPath id="tc2"><polygon points="910,652 921,652 915.5,663"/></clipPath>
<g shape-rendering="auto" clip-path="url(#tc2)"><polygon points="910,652 921,652 915.5,663" fill="#d9d9d9"/>
<line x1="910" y1="652" x2="921" y2="652" stroke="#fff" stroke-width="3.2"/>
<line x1="915.5" y1="663" x2="910" y2="652" stroke="#fff" stroke-width="3.2"/>
<line x1="921" y1="652" x2="915.5" y2="663" stroke="#828282" stroke-width="3.2"/>
</g>
<clipPath id="tc3"><polygon points="5,675.5 16,670 16,681"/></clipPath>
<g shape-rendering="auto" clip-path="url(#tc3)"><polygon points="5,675.5 16,670 16,681" fill="#d9d9d9"/>
<line x1="5" y1="675.5" x2="16" y2="670" stroke="#fff" stroke-width="3.2"/>
<line x1="16" y1="670" x2="16" y2="681" stroke="#828282" stroke-width="3.2"/>
<line x1="16" y1="681" x2="5" y2="675.5" stroke="#828282" stroke-width="3.2"/>
</g>
<clipPath id="tc4"><polygon points="892,670 903,675.5 892,681"/></clipPath>
<g shape-rendering="auto" clip-path="url(#tc4)"><polygon points="892,670 903,675.5 892,681" fill="#d9d9d9"/>
<line x1="892" y1="670" x2="903" y2="675.5" stroke="#fff" stroke-width="3.2"/>
<line x1="892" y1="681" x2="892" y2="670" stroke="#fff" stroke-width="3.2"/>
<line x1="903" y1="675.5" x2="892" y2="681" stroke="#828282" stroke-width="3.2"/>
</g>
<rect x="2" y="686" width="923" height="1" fill="#828282"/>
<rect x="2" y="686" width="1" height="17" fill="#828282"/>
<rect x="3" y="702" width="922" height="1" fill="#ffffff"/>
<rect x="924" y="687" width="1" height="16" fill="#ffffff"/>
<text x="4.2" y="696.5" font-family="Liberation Sans" font-size="12" font-weight="bold" fill="#000" text-anchor="start" letter-spacing="-0.023">Top: tsp_reg, SDFFRX1 tsp_reg(.CK(clk_buf_6),.D(ddzzdd),.RN(hrst),.SE(scan_en),.SI(mout0),.Q(routspare),.QN(gof_int_flop_out_dummy_1)); 0</text>
<rect x="215" y="314" width="236" height="340" fill="#d9d9d9"/>
<rect x="215" y="314" width="236" height="1" fill="#ffffff"/>
<rect x="215" y="314" width="1" height="340" fill="#ffffff"/>
<rect x="216" y="653" width="235" height="1" fill="#828282"/>
<rect x="450" y="315" width="1" height="339" fill="#828282"/>
<text x="221.5" y="327" font-family="Liberation Sans" font-size="12" font-weight="bold" fill="#000" text-anchor="start" letter-spacing="-0.08">Logic Cone</text>
<g shape-rendering="auto"><polygon points="438,321 446.5,325.5 438,330" fill="#d9d9d9"/><path d="M439,330 L439,321.3 L446.3,325.4" stroke="#fff" stroke-width="1.8" fill="none"/><path d="M446.3,325.6 L438.6,330" stroke="#828282" stroke-width="1.3" fill="none"/></g>
<text x="221.5" y="347" font-family="Liberation Sans" font-size="12" font-weight="bold" fill="#000" text-anchor="start" letter-spacing="-0.08">Trace Scan Chain</text>
<rect x="216" y="360" width="231" height="1" fill="#828282"/>
<rect x="216" y="361" width="231" height="1" fill="#ffffff"/>
<text x="221.5" y="380" font-family="Liberation Sans" font-size="12" font-weight="bold" fill="#000" text-anchor="start" letter-spacing="-0.08">Copy Selected to</text>
<g shape-rendering="auto"><polygon points="438,374 446.5,378.5 438,383" fill="#d9d9d9"/><path d="M439,383 L439,374.3 L446.3,378.4" stroke="#fff" stroke-width="1.8" fill="none"/><path d="M446.3,378.6 L438.6,383" stroke="#828282" stroke-width="1.3" fill="none"/></g>
<rect x="216" y="393" width="231" height="1" fill="#828282"/>
<rect x="216" y="394" width="231" height="1" fill="#ffffff"/>
<text x="221.5" y="413" font-family="Liberation Sans" font-size="12" font-weight="bold" fill="#000" text-anchor="start" letter-spacing="-0.08">Edit Gate Display</text>
<text x="221.5" y="433" font-family="Liberation Sans" font-size="12" font-weight="bold" fill="#000" text-anchor="start" letter-spacing="-0.08">List Logic for SDFFRX1</text>
<text x="221.5" y="453" font-family="Liberation Sans" font-size="12" font-weight="bold" fill="#000" text-anchor="start" letter-spacing="-0.08">List Context for SDFFRX1</text>
<text x="221.5" y="473" font-family="Liberation Sans" font-size="12" font-weight="bold" fill="#000" text-anchor="start" letter-spacing="-0.08">List Definition for Instance tsp_reg</text>
<text x="221.5" y="493" font-family="Liberation Sans" font-size="12" font-weight="bold" fill="#000" text-anchor="start" letter-spacing="-0.08">Load Instance Similar to tsp_reg</text>
<rect x="216" y="506" width="231" height="1" fill="#828282"/>
<rect x="216" y="507" width="231" height="1" fill="#ffffff"/>
<rect x="216" y="514" width="233" height="20" fill="#ececec"/>
<rect x="216" y="514" width="233" height="1" fill="#ffffff"/>
<rect x="216" y="514" width="1" height="20" fill="#ffffff"/>
<rect x="217" y="533" width="232" height="1" fill="#828282"/>
<rect x="448" y="515" width="1" height="19" fill="#828282"/>
<rect x="217" y="515" width="231" height="1" fill="#ffffff"/>
<rect x="217" y="515" width="1" height="18" fill="#ffffff"/>
<rect x="218" y="532" width="230" height="1" fill="#828282"/>
<rect x="447" y="516" width="1" height="17" fill="#828282"/>
<text x="221.5" y="526" font-family="Liberation Sans" font-size="12" font-weight="bold" fill="#000" text-anchor="start" letter-spacing="-0.08">Load peer gate in other tree</text>
<rect x="216" y="539" width="231" height="1" fill="#828282"/>
<rect x="216" y="540" width="231" height="1" fill="#ffffff"/>
<text x="221.5" y="559" font-family="Liberation Sans" font-size="12" font-weight="bold" fill="#000" text-anchor="start" letter-spacing="-0.08">Find Gates on Schematic</text>
<text x="221.5" y="579" font-family="Liberation Sans" font-size="12" font-weight="bold" fill="#000" text-anchor="start" letter-spacing="-0.08">Find Nets on Schematic</text>
<rect x="216" y="592" width="231" height="1" fill="#828282"/>
<rect x="216" y="593" width="231" height="1" fill="#ffffff"/>
<text x="221.5" y="612" font-family="Liberation Sans" font-size="12" font-weight="bold" fill="#000" text-anchor="start" letter-spacing="-0.08">Delete</text>
<rect x="216" y="625" width="231" height="1" fill="#828282"/>
<rect x="216" y="626" width="231" height="1" fill="#ffffff"/>
<text x="221.5" y="645" font-family="Liberation Sans" font-size="12" font-weight="bold" fill="#000" text-anchor="start" letter-spacing="-0.08">Place &amp; Route</text>
<g shape-rendering="auto"><polygon points="438,639 446.5,643.5 438,648" fill="#d9d9d9"/><path d="M439,648 L439,639.3 L446.3,643.4" stroke="#fff" stroke-width="1.8" fill="none"/><path d="M446.3,643.6 L438.6,648" stroke="#828282" stroke-width="1.3" fill="none"/></g>
<g shape-rendering="auto"><polygon points="408.5,524.8 395.4,530.2 395.9,531.2 399.2,531.4 393.8,537.3 395.6,539 401.6,533.2 402.8,537.2" fill="#000" stroke="#fff" stroke-width="1.1" stroke-linejoin="round" paint-order="stroke"/></g>
</svg>
</body></html>
